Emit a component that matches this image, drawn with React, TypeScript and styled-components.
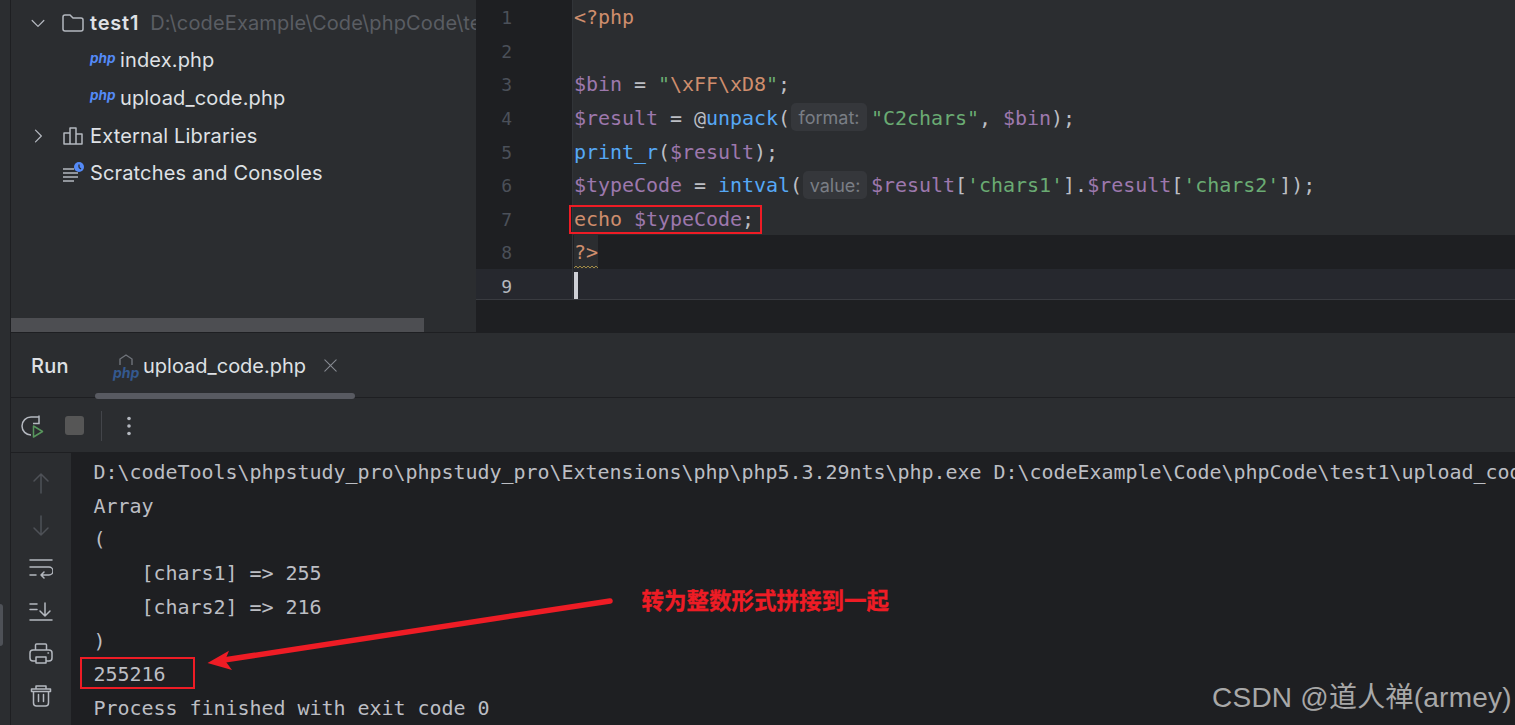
import React from "react";
import styled, { createGlobalStyle } from "styled-components";

const Global = createGlobalStyle`
  html, body { margin: 0; padding: 0; background: #1e1f22; overflow: hidden; }
  * { box-sizing: border-box; }
`;

const mono = `"DejaVu Sans Mono", "Liberation Mono", monospace`;
const ui = `Inter, "Noto Sans", sans-serif`;

const Page = styled.div`
  position: relative; width: 1515px; height: 725px; overflow: hidden;
  display: flex; background: #2b2d30; color: #dfe1e5; font-family: ${ui};
`;
const LeftStrip = styled.div`
  position: relative; width: 11px; flex: none; background: #2b2d30; border-right: 1px solid #1e1f22;
`;
const StripPill = styled.div`
  position: absolute; left: 0; top: 604px; width: 3px; height: 42px; background: #4e5157; border-radius: 0 3px 3px 0;
`;
const Main = styled.div`flex: 1; min-width: 0; display: flex; flex-direction: column;`;
const Top = styled.div`
  height: 333px; flex: none; display: flex; border-bottom: 1px solid #1e1f22;
`;
const Tree = styled.div`
  width: 465px; flex: none; display: flex; flex-direction: column; background: #2b2d30; overflow: hidden;
`;
const TreeRows = styled.div`flex: 1; padding-top: 4px; min-height: 0;`;
const TreeRow = styled.div<{ $file?: boolean }>`
  height: 37.6px; display: flex; align-items: center; white-space: nowrap; overflow: hidden;
  padding: 0 2px 0 ${p => (p.$file ? 79 : 17)}px; font-size: 20px; letter-spacing: 0.15px;
`;
const ChevronSlot = styled.span`width: 34px; flex: none; display: flex; justify-content: flex-start; color: #b4b8bf;`;
const IconSlot = styled.span`width: 28px; flex: none; display: flex; align-items: center;`;
const PhpTag = styled.span`
  font: italic 700 13.6px/1 ${ui}; color: #548af7; width: 30px; flex: none; margin-bottom: 4px; letter-spacing: 0;
`;
const Bold = styled.span`font-weight: 600; margin-right: 11px; letter-spacing: 0.8px;`;
const Hint = styled.span`color: #5a5d63;`;
const TreeScroll = styled.div`height: 14px; width: 413px; background: #4d4e52; flex: none;`;

const Editor = styled.div`flex: 1; min-width: 0; display: flex; flex-direction: column; background: #1e1f22;`;
const CodeArea = styled.div`font: 20px/33.6px ${mono}; letter-spacing: -0.04px;`;
const CodeRow = styled.div<{ $bg: string; $h?: number }>`
  display: flex; height: ${p => p.$h ?? 33.65}px; background: ${p => p.$bg};
`;
const Gutter = styled.div<{ $active?: boolean }>`
  width: 97px; flex: none; background: ${p => (p.$active ? "#26282e" : "#1e1f22")};
  border-right: 1px solid #313438; padding: 1px 60px 0 0; text-align: right; font-size: 18px;
  color: ${p => (p.$active ? "#b4b8bf" : "#4b5059")};
`;
const Code = styled.div`padding: 1px 0 0 1px; white-space: pre; display: flex; align-items: flex-start; color: #bcbec4;`;
const Tok = styled.span<{ $c: string }>`color: ${p => p.$c};`;
const Squiggle = styled.span`
  color: #cf8e6d; background: #2b2d30; position: relative; height: 33.6px; margin-top: -1px; padding-top: 1px; display: inline-block;
`;
const Wave = styled.svg`position: absolute; left: 0; bottom: 0;`;
const Inlay = styled.span<{ $w: number }>`
  display: inline-flex; align-items: center; justify-content: center; width: ${p => p.$w}px; height: 28px;
  margin: 1.5px 4px 0 1px; padding-top: 2px; border-radius: 5px; background: #35373b; color: #7a7e85;
  font: 18px/26px ${ui}; letter-spacing: 0;
`;
const Caret = styled.div`width: 4px; height: 27px; margin-top: 2px; background: #ced0d6;`;
const EditorBottom = styled.div`flex: 1; border-top: 1px solid #393b40; background: #1e1f22;`;

const TabBar = styled.div`
  height: 65px; flex: none; display: flex; align-items: center; border-bottom: 1px solid #1e1f22;
  padding-left: 20px; background: #2b2d30; font-size: 20px; padding-top: 1px;
`;
const RunLabel = styled.span`font-weight: 500; width: 64px; letter-spacing: 0.2px;`;
const Tab = styled.div`
  position: relative; height: 100%; display: flex; align-items: center; gap: 5px; padding: 0 18px; width: 260px; color: #dfe1e5;
  &::after {
    content: ""; position: absolute; left: 0; right: 0; bottom: -2px; height: 6px; background: #585a61; border-radius: 3px;
  }
`;
const TabIcon = styled.span`position: relative; width: 25px; height: 26px; flex: none; display: block; margin-top: 2px;`;
const TabPhp = styled.span`
  position: absolute; left: 0; bottom: 0; font: italic 700 14px/1 ${ui}; color: #34598f;
`;
const TabArch = styled.svg`position: absolute; left: 6px; top: 0;`;
const CloseWrap = styled.span`margin-left: 11px; display: flex;`;

const Toolbar = styled.div`
  height: 55px; flex: none; display: flex; align-items: center; padding: 1px 0 0 10px; background: #2b2d30; border-bottom: 1px solid #1e1f22;
`;
const ToolIcon = styled.span`width: 24px; height: 24px; display: flex; align-items: center; justify-content: center; flex: none;`;
const Stop = styled.span`width: 19px; height: 19px; margin: 0 17px 0 20px; border-radius: 3px; background: #565656; flex: none;`;
const Sep = styled.span`width: 1px; height: 30px; background: #43454a; margin-right: 15px; flex: none;`;

const Bottom = styled.div`flex: 1; min-height: 0; display: flex;`;
const SideIcons = styled.div`
  width: 60px; flex: none; background: #2b2d30; display: flex; flex-direction: column; align-items: center; padding-top: 18px; gap: 18.6px;
`;
const Console = styled.div`
  flex: 1; min-width: 0; background: #1e1f22; padding: 3px 0 0 22.5px; font: 20px/33.7px ${mono}; letter-spacing: -0.04px;
  color: #bcbec4; white-space: pre; overflow: hidden;
`;

const RedBox = styled.div<{ $x: number; $y: number; $w: number; $h: number }>`
  position: absolute; left: ${p => p.$x}px; top: ${p => p.$y}px; width: ${p => p.$w}px; height: ${p => p.$h}px;
  border: 2px solid #ee1c25;
`;
const Arrow = styled.svg`position: absolute; left: 190px; top: 585px;`;
const Note = styled.div`
  position: absolute; left: 641.5px; top: 584px; font: 700 22.5px/30px "Noto Sans CJK SC", sans-serif; color: #ee1c25; white-space: nowrap;
  -webkit-text-stroke: 0.3px #ee1c25;
`;
const Watermark = styled.div`
  position: absolute; left: 1212px; top: 680px; font: 28px/36px "Liberation Sans", "Noto Sans CJK SC", sans-serif; color: #a8a8a8; white-space: nowrap; letter-spacing: 0.24px;
`;

type IconProps = { children: React.ReactNode; s?: number; c?: string };
const I = ({ children, s = 24, c = "#868a91" }: IconProps) => (
  <svg width={s} height={s} viewBox="0 0 24 24" fill="none" stroke={c} strokeWidth={1.5} strokeLinecap="round" strokeLinejoin="round">
    {children}
  </svg>
);

const KW = "#cf8e6d", VAR = "#9d78ad", STR = "#6aab73", FN = "#56a8f5";
const LINE = "#2b2d30", DARK = "#1e1f22";

const V = ({ children }: { children: React.ReactNode }) => <Tok $c={VAR}>{children}</Tok>;

export default function App() {
  return (
    <Page>
      <Global />
      <LeftStrip><StripPill /></LeftStrip>
      <Main>
        <Top>
          <Tree>
            <TreeRows>
              <TreeRow>
                <ChevronSlot><I s={20} c="#b4b8bf"><path d="M5 9l7 7 7-7" /></I></ChevronSlot>
                <IconSlot>
                  <svg width="22" height="19" viewBox="0 0 22 19" fill="none" stroke="#b4b8bf" strokeWidth="1.5"><path d="M1 4a2 2 0 0 1 2-2h5l3 3h8a2 2 0 0 1 2 2v9a2 2 0 0 1-2 2H3a2 2 0 0 1-2-2z" /></svg>
                </IconSlot>
                <Bold>test1</Bold>
                <Hint>D:\codeExample\Code\phpCode\test1</Hint>
              </TreeRow>
              <TreeRow $file><PhpTag>php</PhpTag>index.php</TreeRow>
              <TreeRow $file><PhpTag>php</PhpTag>upload_code.php</TreeRow>
              <TreeRow>
                <ChevronSlot><I s={20} c="#b4b8bf"><path d="M9 5l7 7-7 7" /></I></ChevronSlot>
                <IconSlot>
                  <svg width="22" height="20" viewBox="0 0 22 20" fill="none" stroke="#b4b8bf" strokeWidth="1.5" strokeLinejoin="round"><path d="M2 7h6v11H2zM8 2h6v16H8zM14 8h6v10h-6z" /></svg>
                </IconSlot>
                External Libraries
              </TreeRow>
              <TreeRow>
                <ChevronSlot />
                <IconSlot>
                  <svg width="24" height="22" viewBox="0 0 24 22" fill="none"><path d="M1 7h11M1 11h15M1 15h15M1 19h11" stroke="#b4b8bf" strokeWidth="1.5" /><circle cx="17" cy="5" r="5" fill="#548af7" /><path d="M17 2.5V5.5M17 5.5l2 1.5" stroke="#2b2d30" strokeWidth="1.3" /></svg>
                </IconSlot>
                Scratches and Consoles
              </TreeRow>
            </TreeRows>
            <TreeScroll />
          </Tree>
          <Editor>
            <CodeArea>
              <CodeRow $bg={LINE}><Gutter>1</Gutter><Code><Tok $c={KW}>{"<?php"}</Tok></Code></CodeRow>
              <CodeRow $bg={LINE}><Gutter>2</Gutter><Code /></CodeRow>
              <CodeRow $bg={LINE}><Gutter>3</Gutter><Code><V>$bin</V>{" = "}<Tok $c={STR}>"</Tok><Tok $c={KW}>\xFF\xD8</Tok><Tok $c={STR}>"</Tok>;</Code></CodeRow>
              <CodeRow $bg={LINE}><Gutter>4</Gutter><Code><V>$result</V>{" = @"}<Tok $c={FN}>unpack</Tok>(<Inlay $w={76}>format:</Inlay><Tok $c={STR}>"C2chars"</Tok>{", "}<V>$bin</V>);</Code></CodeRow>
              <CodeRow $bg={LINE}><Gutter>5</Gutter><Code><Tok $c={FN}>print_r</Tok>(<V>$result</V>);</Code></CodeRow>
              <CodeRow $bg={LINE}><Gutter>6</Gutter><Code><V>$typeCode</V>{" = "}<Tok $c={FN}>intval</Tok>(<Inlay $w={64}>value:</Inlay><V>$result</V>[<Tok $c={STR}>'chars1'</Tok>].<V>$result</V>[<Tok $c={STR}>'chars2'</Tok>]);</Code></CodeRow>
              <CodeRow $bg={LINE}><Gutter>7</Gutter><Code><Tok $c={KW}>{"echo "}</Tok><V>$typeCode</V>;</Code></CodeRow>
              <CodeRow $bg={DARK}>
                <Gutter>8</Gutter>
                <Code>
                  <Squiggle>
                    {"?>"}
                    <Wave width="24" height="4" viewBox="0 0 24 4" fill="none" stroke="#a08a45" strokeWidth="1"><path d="M0 3l2-2 2 2 2-2 2 2 2-2 2 2 2-2 2 2 2-2 2 2 2-2 2 2" /></Wave>
                  </Squiggle>
                </Code>
              </CodeRow>
              <CodeRow $bg="#26282e" $h={30}><Gutter $active>9</Gutter><Code><Caret /></Code></CodeRow>
            </CodeArea>
            <EditorBottom />
          </Editor>
        </Top>
        <TabBar>
          <RunLabel>Run</RunLabel>
          <Tab>
            <TabIcon>
              <TabArch width="14" height="12" viewBox="0 0 14 12" fill="none" stroke="#6f737a" strokeWidth="1.4"><path d="M1 11V5L7 1l6 4v6" /></TabArch>
              <TabPhp>php</TabPhp>
            </TabIcon>
            upload_code.php
            <CloseWrap><I s={17} c="#868a91"><path d="M4 4l16 16M20 4L4 20" /></I></CloseWrap>
          </Tab>
        </TabBar>
        <Toolbar>
          <ToolIcon>
            <svg width="24" height="26" viewBox="0 0 24 26" fill="none" strokeWidth="1.5"><path d="M10 22a9 9 0 0 1 0-18h8M18 2.5v8h-6" stroke="#b4b8bf" /><path d="M12.5 13l9 5.5-9 5.5z" stroke="#57965c" strokeLinejoin="round" /></svg>
          </ToolIcon>
          <Stop />
          <Sep />
          <ToolIcon>
            <svg width="24" height="24" viewBox="0 0 24 24" fill="#b4b8bf"><circle cx="12" cy="4.5" r="1.8" /><circle cx="12" cy="12" r="1.8" /><circle cx="12" cy="19.5" r="1.8" /></svg>
          </ToolIcon>
        </Toolbar>
        <Bottom>
          <SideIcons>
            <I c="#4e5157"><path d="M12 22V3M5 10l7-7 7 7" /></I>
            <I c="#4e5157"><path d="M12 2v19M5 14l7 7 7-7" /></I>
            <I c="#b4b8bf"><path d="M1 4h22M1 11h19a4 4 0 0 1 0 8h-8M15 16l-3 3 3 3M1 19h6" /></I>
            <I c="#b4b8bf"><path d="M1 5h7M1 10.5h7M1 21h22M16 4v13M11 12l5 5 5-5" /></I>
            <I c="#b4b8bf"><path d="M6.5 9V4a1 1 0 0 1 1-1h9a1 1 0 0 1 1 1v5M7 20H4a3 3 0 0 1-3-3v-5a3 3 0 0 1 3-3h16a3 3 0 0 1 3 3v5a3 3 0 0 1-3 3h-3M7 16h10v6H7zM19 12h.5" /></I>
            <I c="#b4b8bf"><path d="M2.5 5h19v2.5h-19zM7 5V2h10v3M4.5 8v11a3 3 0 0 0 3 3h9a3 3 0 0 0 3-3V8M9.5 10.5v7M14.5 10.5v7" /></I>
          </SideIcons>
          <Console>
            {`D:\\codeTools\\phpstudy_pro\\phpstudy_pro\\Extensions\\php\\php5.3.29nts\\php.exe D:\\codeExample\\Code\\phpCode\\test1\\upload_code.php
Array
(
    [chars1] => 255
    [chars2] => 216
)
255216
Process finished with exit code 0`}
          </Console>
        </Bottom>
      </Main>
      <RedBox $x={569} $y={205} $w={193} $h={29} />
      <RedBox $x={80} $y={657} $w={115} $h={32} />
      <Arrow width="430" height="90" viewBox="0 0 430 90" fill="none">
        <path d="M420 16L34 75" stroke="#ee1c25" strokeWidth="5.5" strokeLinecap="round" />
        <path d="M17.5 78L39 65.7L35 75.5L42 85Z" fill="#ee1c25" />
      </Arrow>
      <Note>转为整数形式拼接到一起</Note>
      <Watermark>CSDN @道人禅(armey)</Watermark>
    </Page>
  );
}
